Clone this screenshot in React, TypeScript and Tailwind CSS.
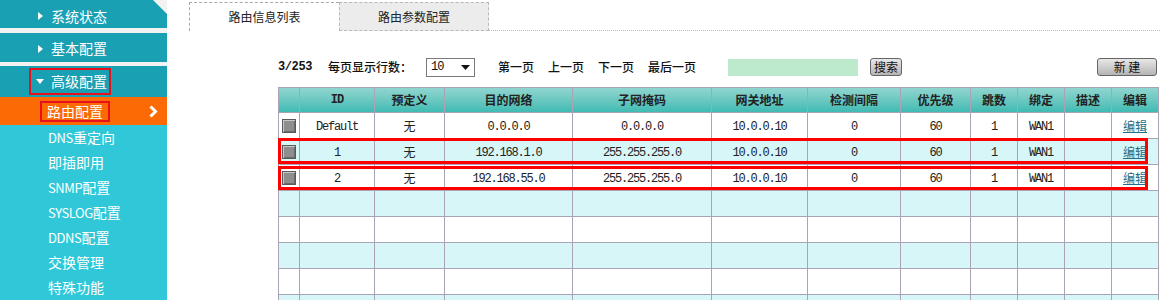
import React from "react";

const CJK = "font-['Noto_Sans_CJK_SC',sans-serif]";
const MONO = "font-['Liberation_Mono','Noto_Sans_CJK_SC',monospace]";

function TriRight() {
  return (
    <svg width="5" height="8" viewBox="0 0 5 8" className="shrink-0">
      <polygon points="0,0 5,4 0,8" fill="#fff" />
    </svg>
  );
}
function TriDown() {
  return (
    <svg width="8" height="5" viewBox="0 0 8 5" className="shrink-0">
      <polygon points="0,0 8,0 4,5" fill="#fff" />
    </svg>
  );
}

const cols = [21, 75, 70, 128, 139, 96, 93, 70, 47, 47, 47, 47];
const heads = ["", "ID", "预定义", "目的网络", "子网掩码", "网关地址", "检测间隔", "优先级", "跳数", "绑定", "描述", "编辑"];
const rows = [
  ["Default", "无", "0.0.0.0", "0.0.0.0", "10.0.0.10", "0", "60", "1", "WAN1"],
  ["1", "无", "192.168.1.0", "255.255.255.0", "10.0.0.10", "0", "60", "1", "WAN1"],
  ["2", "无", "192.168.55.0", "255.255.255.0", "10.0.0.10", "0", "60", "1", "WAN1"],
];

function Checkbox() {
  return (
    <div className="mx-auto w-[14px] h-[14px] border border-[#5a5a5a] bg-[#8e8e8e] shadow-[inset_1px_1px_0_#c8c8c8,inset_-1px_-1px_0_#6a6a6a]" />
  );
}

export default function App() {
  const sub = ["DNS重定向", "即插即用", "SNMP配置", "SYSLOG配置", "DDNS配置", "交换管理", "特殊功能"];
  const renderSub = (s: string) => {
    const m = s.match(/^([A-Z]+)(.*)$/);
    if (m)
      return (
        <span>
          <span className="text-[13px] tracking-[-0.4px]">{m[1]}</span>
          {m[2]}
        </span>
      );
    return <span>{s}</span>;
  };
  const totalRows = 8;
  return (
    <div className={`w-[1160px] h-[300px] overflow-hidden flex items-start bg-white ${CJK}`}>
      {/* Sidebar */}
      <aside className="w-[167px] shrink-0 h-[300px] flex flex-col bg-[#f2f2f2] text-white text-[14px]">
        <div className="shrink-0 h-[28px] bg-[#1aa0b3] [clip-path:polygon(0_0,153px_0,167px_14px,167px_100%,0_100%)] flex items-center pt-[4px] pl-[38px] gap-[8px]">
          <TriRight />
          <span>系统状态</span>
        </div>
        <div className="shrink-0 mt-[5px] h-[29px] bg-[#1aa0b3] flex items-center pt-[2px] pl-[38px] gap-[8px]">
          <TriRight />
          <span>基本配置</span>
        </div>
        <div className="shrink-0 mt-[4px] h-[31px] bg-[#1aa0b3] flex items-center pl-[29px]">
          <div className="h-[27px] border-2 border-[#e8101a] flex items-center pl-[5px] pr-[2px] gap-[7px]">
            <TriDown />
            <span>高级配置</span>
          </div>
        </div>
        <div className="shrink-0 h-[28px] bg-[#fb6a04] flex items-center pl-[40px] pr-[9px]">
          <div className="h-[21px] border-2 border-[#e8101a] flex items-center px-[5px]">路由配置</div>
          <svg width="9" height="13" viewBox="0 0 9 13" className="ml-auto">
            <polyline points="1.5,1.5 6.5,6.5 1.5,11.5" fill="none" stroke="#fff" strokeWidth="3" />
          </svg>
        </div>
        <div className="flex-1 bg-[#30c8d8] pl-[48px] flex flex-col">
          {sub.map((s) => (
            <div key={s} className="h-[25px] shrink-0 flex items-center">{renderSub(s)}</div>
          ))}
        </div>
      </aside>

      {/* Main */}
      <main className="flex-1 min-w-0 flex flex-col">
        <div className="shrink-0 flex h-[31px] pt-[2px] pl-[22px] text-[12px] text-[#222]">
          <div className="w-[150px] border-t border-l border-dashed border-[#a8a8a8] bg-white flex items-center justify-center">路由信息列表</div>
          <div className="w-[150px] border border-dashed border-[#b8b8b8] bg-[#ececec] flex items-center justify-center">路由参数配置</div>
          <div className="flex-1 border-b border-dotted border-[#c4b4c4]" />
        </div>

        <div className="shrink-0 pl-[111px] pr-[2px]">
          <div className="mt-[25px] h-[22px] flex items-center text-[12px] font-medium text-[#111]">
            <span className={`${MONO} w-[50px] text-[12px] font-bold tracking-[-0.4px]`}>3/253</span>
            <span className="w-[98px]">每页显示行数：</span>
            <div className="w-[49px] h-[19px] border border-[#7a7a7a] bg-white flex items-center pl-[4px] pr-[4px] font-normal">
              <span className={`${MONO} text-[12px] tracking-[-1px]`}>10</span>
              <svg width="9" height="5" viewBox="0 0 9 5" className="ml-auto">
                <polygon points="0,0 9,0 4.5,5" fill="#111" />
              </svg>
            </div>
            <span className="ml-[23px] w-[50px]">第一页</span>
            <span className="w-[50px]">上一页</span>
            <span className="w-[50px]">下一页</span>
            <span className="w-[80px]">最后一页</span>
            <div className="w-[130px] h-[17px] bg-[#bde9cd]" />
            <div className="ml-[12px] w-[32px] h-[18px] border border-[#666] rounded-[3px] bg-gradient-to-b from-[#e8e8e8] to-[#b4b4b4] flex items-center justify-center text-[12px] font-normal">搜索</div>
            <div className="ml-[195px] w-[60px] h-[18px] border border-[#666] rounded-[3px] bg-gradient-to-b from-[#e8e8e8] to-[#b4b4b4] flex items-center justify-center text-[12px] font-normal">新 建</div>
          </div>

          <div className="relative mt-[9px] w-[880px]">
            <table className="w-[880px] table-fixed border-collapse text-[12px] text-[#222]">
              <colgroup>
                {cols.map((w, i) => (
                  <col key={i} style={{ width: w }} />
                ))}
              </colgroup>
              <thead>
                <tr className="h-[25px] bg-gradient-to-b from-[#8fd5cf] to-[#38bab2]">
                  {heads.map((h, i) => (
                    <th key={i} className={`border border-[#aaa3b6] p-0 font-bold text-[#222] ${i === 1 ? MONO + " text-[12px] tracking-[-1px]" : ""}`}>{h}</th>
                  ))}
                </tr>
              </thead>
              <tbody>
                {Array.from({ length: totalRows }).map((_, r) => {
                  const d = rows[r];
                  const bg = r % 2 === 1 ? "bg-[#d6f6f8]" : "bg-white";
                  return (
                    <tr key={r} className={`h-[26px] ${bg}`}>
                      {cols.map((_, c) => {
                        let content: React.ReactNode = null;
                        if (d) {
                          if (c === 0) content = <Checkbox />;
                          else if (c === 11) content = <span className="text-[#1d6f8a] underline">编辑</span>;
                          else if (c === 10) content = null;
                          else {
                            const v = d[c - 1];
                            content = v === "无" ? <span className="text-[12px]">无</span> : <span className={`${MONO} text-[12px] tracking-[-1.2px]`}>{v}</span>;
                          }
                        }
                        return (
                          <td key={c} className="border border-[#aaa3b6] p-0 text-center align-middle">{content}</td>
                        );
                      })}
                    </tr>
                  );
                })}
              </tbody>
            </table>
            <div className="absolute left-0 top-[51px] w-[870px] h-[26px] border-[3px] border-[#ff0000] pointer-events-none" />
            <div className="absolute left-0 top-[79px] w-[870px] h-[24px] border-[3px] border-[#ff0000] pointer-events-none" />
          </div>
        </div>
      </main>
    </div>
  );
}
